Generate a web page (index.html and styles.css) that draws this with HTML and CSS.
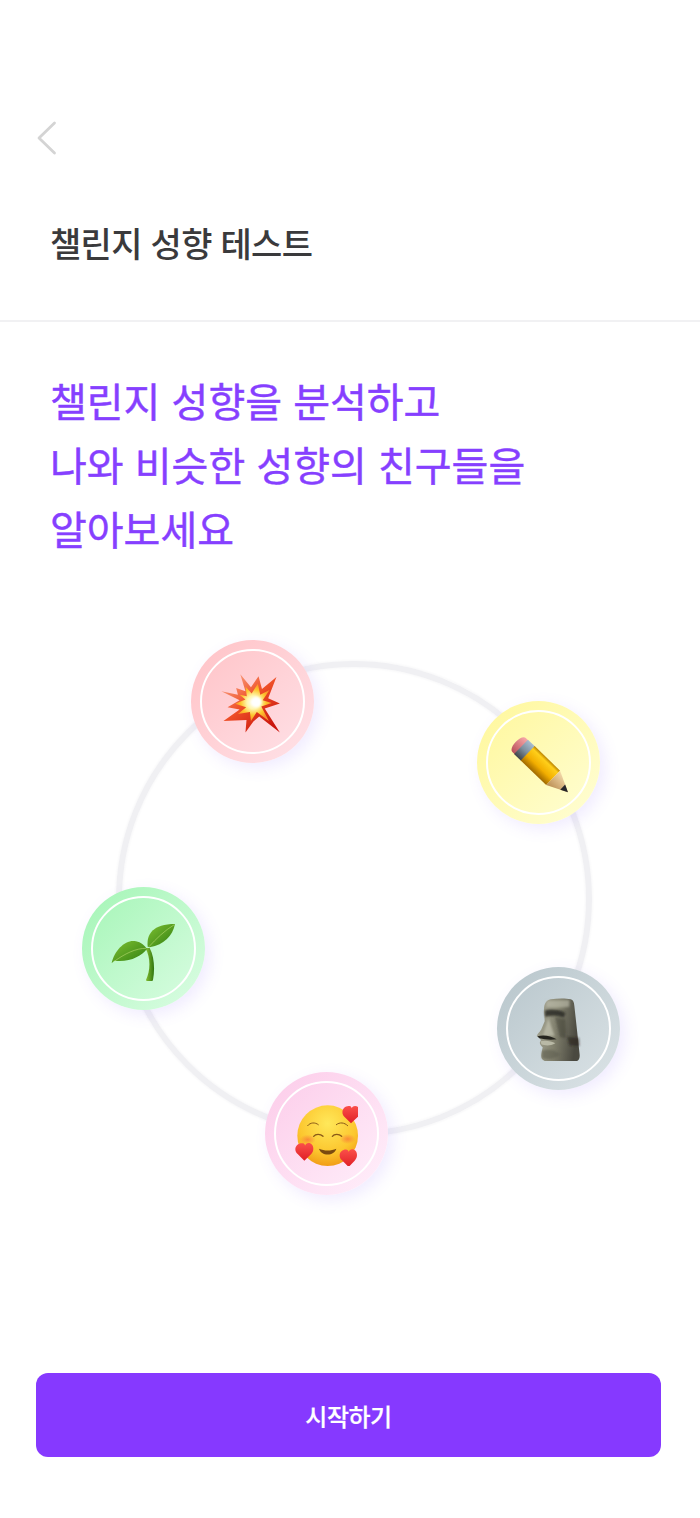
FILE: index.html
```html
<!DOCTYPE html>
<html lang="ko">
<head>
<meta charset="utf-8">
<title>챌린지 성향 테스트</title>
<link rel="stylesheet" href="styles.css">
</head>
<body>
<div class="page">
  <header class="header">
    <button class="back" aria-label="뒤로">
      <svg class="back-icon" viewBox="0 0 20 34"><path d="M17.5 2 2 17l15.500 15" fill="none" stroke="#d4d4d4" stroke-width="2.800" stroke-linecap="round" stroke-linejoin="round"/></svg>
    </button>
    <h1 class="title">챌린지 성향 테스트</h1>
  </header>
  <main class="main">
    <h2 class="headline">챌린지 성향을 분석하고<br>나와 비슷한 성향의 친구들을<br>알아보세요</h2>
    <div class="diagram">
      <div class="ring"></div>

      <div class="node node-red"><div class="node-inner"></div>
        <svg class="emoji" viewBox="148 150 186 186">
          <defs>
            <linearGradient id="bo" x1="0.1" y1="0.1" x2="0.8" y2="0.95"><stop offset="0" stop-color="#f9a080"/><stop offset=".45" stop-color="#ef5028"/><stop offset="1" stop-color="#c9140c"/></linearGradient>
            <radialGradient id="bc"><stop offset="0" stop-color="#fff"/><stop offset=".35" stop-color="#fff6b0"/><stop offset=".7" stop-color="#fdc52c"/><stop offset="1" stop-color="#f9902a"/></radialGradient>
          </defs>
          <polygon fill="url(#bo)" points="207,162 238,200 260,168 270,205 312,170 288,232 322,247 278,262 322,332 262,285 245,300 222,332 225,295 158,298 205,265 170,258 205,238 152,212 200,222 195,202 222,212"/>
          <polygon fill="url(#bc)" points="222,198 240,218 258,190 265,222 292,208 272,238 298,246 268,256 290,298 255,272 238,298 235,272 200,278 224,258 192,248 222,236 205,222 226,226"/>
          <circle cx="254" cy="243" r="15" fill="#fff" filter="blur(3px)"/>
        </svg>
      </div>

      <div class="node node-yellow"><div class="node-inner"></div>
        <svg class="emoji" viewBox="140 135 192 192">
          <defs>
            <linearGradient id="pb" x1="0" y1="0" x2="0" y2="1"><stop offset="0" stop-color="#b98200"/><stop offset=".16" stop-color="#ffcf1a"/><stop offset=".6" stop-color="#f2ae00"/><stop offset="1" stop-color="#9f6800"/></linearGradient>
            <linearGradient id="pf" x1="0" y1="0" x2="0" y2="1"><stop offset="0" stop-color="#a8bdd0"/><stop offset=".5" stop-color="#7d8f9e"/><stop offset="1" stop-color="#3f4348"/></linearGradient>
            <linearGradient id="pe" x1="0" y1="0" x2="0" y2="1"><stop offset="0" stop-color="#f7a8a8"/><stop offset="1" stop-color="#b9505a"/></linearGradient>
            <linearGradient id="pw" x1="0" y1="0" x2="0" y2="1"><stop offset="0" stop-color="#f5dcae"/><stop offset="1" stop-color="#b98c50"/></linearGradient>
          </defs>
          <g transform="translate(172 170) rotate(44)">
            <path d="M10-29H24V29H10C-8 29-8-29 10-29Z" fill="url(#pe)"/>
            <rect x="18" y="-30" width="30" height="60" fill="url(#pf)"/>
            <rect x="46" y="-30" width="106" height="60" fill="url(#pb)"/>
            <path d="M152-30 214 0 152 30Z" fill="url(#pw)"/>
            <path d="M192-10.500 214 0 192 10.500Z" fill="#26262a"/>
          </g>
        </svg>
      </div>

      <div class="node node-grey"><div class="node-inner"></div>
        <svg class="emoji" viewBox="138 139 192 192">
          <defs>
            <linearGradient id="mo" x1="0" y1="0" x2="1" y2="0.2"><stop offset="0" stop-color="#a9a998"/><stop offset=".5" stop-color="#83826f"/><stop offset="1" stop-color="#4a4940"/></linearGradient>
            <filter id="ms"><feGaussianBlur stdDeviation="3"/></filter>
          </defs>
          <path fill="url(#mo)" d="M212 146C232 143 258 143 272 146 280 148 282 155 283 165L299 312C300 326 294 333 280 334 255 337 225 336 198 332 186 330 182 322 184 310L188 290C182 284 178 280 180 274 186 268 180 262 170 256 172 250 178 246 184 236L194 212 192 178C192 160 198 149 212 146Z"/>
          <g filter="url(#ms)">
            <path d="M194 180C210 174 235 176 256 186L252 200C232 194 212 194 196 198Z" fill="#2a2923" opacity=".85"/>
            <path d="M205 202 224 256H188Z" fill="#c7c7b5" opacity=".65"/>
            <path d="M225 200 240 260 258 262 256 205Z" fill="#3d3c33" opacity=".5"/>
            <path d="M200 150 268 148 268 168C245 172 220 172 198 170Z" fill="#c3c3b0" opacity=".6"/>
            <path d="M186 300C205 294 228 296 240 312 222 326 200 328 186 322Z" fill="#5e5d50" opacity=".6"/>
            <path d="M262 258 297 262 298 286 268 284Z" fill="#28271f" opacity=".65"/>
          </g>
          <path d="M172 257C190 251 212 255 230 266 212 269 195 267 178 263Z" fill="#26251f"/>
          <path d="M182 272C197 268 215 272 226 278 210 287 194 285 184 281Z" fill="#b9b9a6"/>
        </svg>
      </div>

      <div class="node node-pink"><div class="node-inner"></div>
        <svg class="emoji" viewBox="131 137 192 192">
          <defs>
            <radialGradient id="fa" cx=".5" cy=".3" r=".8"><stop offset="0" stop-color="#ffe85a"/><stop offset=".6" stop-color="#fcc62e"/><stop offset="1" stop-color="#ed8a0c"/></radialGradient>
            <radialGradient id="bl"><stop offset="0" stop-color="#f9703a" stop-opacity=".7"/><stop offset="1" stop-color="#f9703a" stop-opacity="0"/></radialGradient>
            <linearGradient id="he" x1="0" y1="0" x2="0" y2="1"><stop offset="0" stop-color="#fb4f4a"/><stop offset="1" stop-color="#df1f26"/></linearGradient>
          </defs>
          <circle cx="232" cy="238" r="91" fill="url(#fa)"/>
          <ellipse cx="172" cy="250" rx="24" ry="15" fill="url(#bl)"/>
          <ellipse cx="292" cy="248" rx="24" ry="15" fill="url(#bl)"/>
          <g fill="none" stroke="#8a5a18" stroke-linecap="round">
            <path d="M172 208C180 198 194 197 204 205" stroke-width="3"/>
            <path d="M258 205C268 197 282 198 292 208" stroke-width="3"/>
            <path d="M190 240C196 232 210 232 218 240" stroke-width="4"/>
            <path d="M246 240C252 232 266 232 274 240" stroke-width="4"/>
          </g>
          <path d="M206 277C222 284 242 284 258 277 252 300 212 300 206 277Z" fill="#7a4a10"/>
          <path fill="url(#he)" d="M302 201 282 181C268 166 282 146 298 149 302 150 304 153 304 156 306 151 310 149 314 149 330 149 334 170 322 182Z"/>
          <path fill="url(#he)" d="M162 313 142 293C126 278 140 258 158 261 162 262 164 265 164 268 166 263 170 260 174 260 190 260 194 282 182 294Z"/>
          <path fill="url(#he)" d="M295 332 275 312C259 297 273 278 289 280 293 281 295 284 295 287 297 282 301 279 305 279 321 279 325 301 313 313Z"/>
        </svg>
      </div>

      <div class="node node-green"><div class="node-inner"></div>
        <svg class="emoji" viewBox="140 139 192 192">
          <defs>
            <linearGradient id="lf" x1="0" y1="0" x2="1" y2="1"><stop offset="0" stop-color="#7fc032"/><stop offset="1" stop-color="#2f7e10"/></linearGradient>
            <linearGradient id="st" x1="0" y1="0" x2="1" y2="0"><stop offset="0" stop-color="#8cc435"/><stop offset="1" stop-color="#2f7510"/></linearGradient>
          </defs>
          <path d="M243 232C260 262 258 300 245 328 250 338 262 336 266 328 272 296 270 258 256 232Z" fill="url(#st)"/>
          <path d="M142 278C150 238 185 205 215 212 230 215 240 224 248 234 232 256 195 276 150 270Z" fill="url(#lf)"/>
          <path d="M250 228C246 190 266 160 332 160 325 195 300 222 256 230Z" fill="url(#lf)"/>
          <path d="M150 272C180 250 215 232 246 233M254 228C275 205 300 180 330 162" fill="none" stroke="#c5e27a" stroke-width="2" opacity=".8"/>
        </svg>
      </div>
    </div>
  </main>
  <footer class="footer">
    <button class="start">시작하기</button>
  </footer>
</div>
</body>
</html>
```

FILE: styles.css
```css
* { box-sizing: border-box; margin: 0; padding: 0; }
html, body { width: 700px; height: 1518px; background: #fff; overflow: hidden; }
body { font-family: "Noto Sans CJK KR", "Noto Sans", sans-serif; }
.page { display: flex; flex-direction: column; height: 1518px; }

.header { height: 322px; border-bottom: 2px solid #f1f1f3; padding: 121px 0 0 50px; }
.back { display: block; width: 20px; height: 34px; margin-left: -13px; border: 0; background: none; }
.back-icon { display: block; width: 20px; height: 34px; }
.title { margin-top: 63px; font-size: 34px; line-height: 50px; font-weight: 500; color: #3a3a3c; letter-spacing: -0.7px; }

.main { flex: 1; padding: 46px 0 0 50px; }
.headline { font-size: 40px; line-height: 64px; font-weight: 400; -webkit-text-stroke: 0.45px #863fff; color: #863fff; letter-spacing: 0; }

.diagram { position: relative; width: 700px; height: 700px; margin: 40px 0 0 -50px; }
.ring { position: absolute; left: 116px; top: 61px; width: 476px; height: 476px; border-radius: 50%; border: 6px solid #f0f0f3; box-shadow: 0 0 3px rgba(60, 60, 90, 0.07), inset 0 0 3px rgba(60, 60, 90, 0.07); }
.node { position: absolute; width: 123px; height: 123px; border-radius: 50%; box-shadow: 5px 5px 16px rgba(130, 90, 255, 0.12); display: flex; align-items: center; justify-content: center; }
.node-inner { position: absolute; inset: 9px; border-radius: 50%; border: 2px solid #fff; }
.emoji { display: block; width: 64px; height: 64px; position: relative; margin-right: 2px; filter: blur(0.3px); }
.node-red { left: 191px; top: 40px; background: linear-gradient(135deg, #ffc2c6, #ffe2e8); }
.node-yellow { left: 477px; top: 101px; background: linear-gradient(135deg, #fff79a, #fffed6); }
.node-grey { left: 497px; top: 367px; background: linear-gradient(135deg, #b7c5cb, #dce4e7); }
.node-pink { left: 265px; top: 472px; background: linear-gradient(135deg, #fccbe9, #fff0fb); }
.node-green { left: 82px; top: 287px; background: linear-gradient(135deg, #a3f5b5, #dcfde4); }

.footer { padding: 0 39px 61px 36px; }
.start { display: block; width: 100%; height: 84px; border: 0; border-radius: 12px; background: #8639ff; color: #fff; font-family: inherit; font-size: 24px; font-weight: 500; -webkit-text-stroke: 0.2px #fff; letter-spacing: -0.5px; }
```
